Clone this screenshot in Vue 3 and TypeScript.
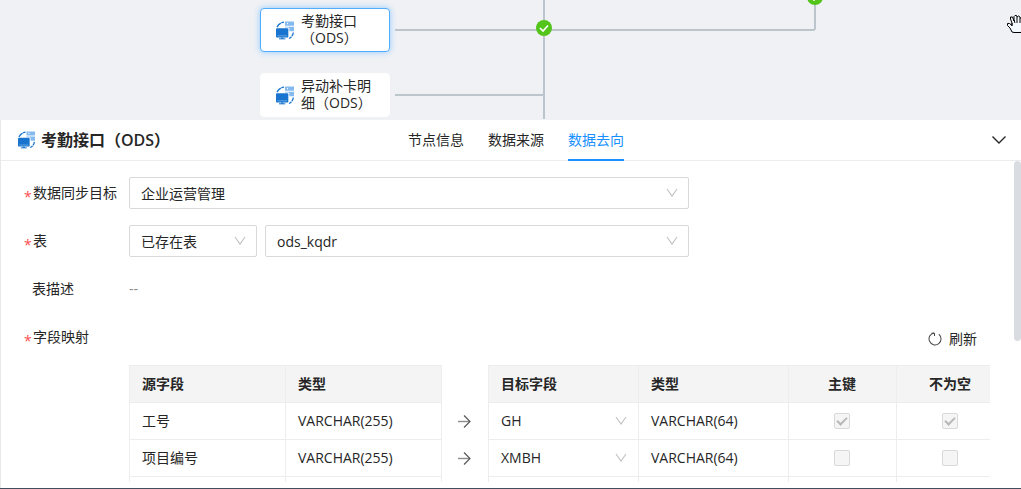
<script setup lang="ts">
import { ref } from 'vue'

interface FlowNode { id: string; label: string; active: boolean }
interface SourceField { name: string; type: string }
interface TargetField { name: string; type: string; primary: boolean; required: boolean }

const nodes: FlowNode[] = [
  { id: 'kq', label: '考勤接口（ODS）', active: true },
  { id: 'bk', label: '异动补卡明细（ODS）', active: false },
]

const tabs = ['节点信息', '数据来源', '数据去向']
const activeTab = ref('数据去向')

const target = ref('企业运营管理')
const tableMode = ref('已存在表')
const tableName = ref('ods_kqdr')

const sources: SourceField[] = [
  { name: '工号', type: 'VARCHAR(255)' },
  { name: '项目编号', type: 'VARCHAR(255)' },
]
const targets = ref<TargetField[]>([
  { name: 'GH', type: 'VARCHAR(64)', primary: true, required: true },
  { name: 'XMBH', type: 'VARCHAR(64)', primary: false, required: false },
])
</script>

<template>
  <div class="page">
    <svg class="defs" aria-hidden="true">
      <symbol id="sync" viewBox="0 0 54 56">
        <path d="M3 18C7 10 13 5 24 3" fill="none" stroke="#1874cf" stroke-width="4" stroke-dasharray="17 2 9" />
        <path d="M52 34C51 42 47 48 39 52" fill="none" stroke="#1874cf" stroke-width="4" stroke-dasharray="12 2 9" />
        <rect x="27" y="1" width="27" height="13" rx="1" fill="#85baf0" />
        <rect x="33" y="5" width="3" height="4" fill="#fff" />
        <path d="M27 17h27v13H40V22a4 4 0 0 0-4-3h-9z" fill="#85baf0" />
        <rect x="0" y="21" width="37" height="28" rx="3" fill="#1874cf" />
        <path d="M4 44h29" stroke="#8dbdec" stroke-width="2" />
        <path d="M9 53h19" stroke="#1874cf" stroke-width="3" />
        <path d="M15 49h7v4h-7z" fill="#1874cf" />
      </symbol>
      <symbol id="caret" viewBox="0 0 12 12">
        <path d="M1 2l5 7 5-7" fill="none" stroke="currentColor" stroke-width="1.1" />
      </symbol>
    </svg>

    <section class="canvas">
      <svg class="edges" aria-hidden="true">
        <g fill="none" stroke="#bdc5cc" stroke-width="2">
          <path d="M395 30H813a2 2 0 0 0 2-2V0" />
          <path d="M395 95H542a2 2 0 0 0 2-2" />
          <path d="M544 0V119" />
        </g>
        <g v-for="[x, y] in [[544, 28], [815, -3]]" :key="x" :transform="`translate(${x} ${y})`">
          <circle r="8" fill="#52c41a" />
          <path d="M-4 0l3 3 5-5.500" fill="none" stroke="#fff" stroke-width="1.700" />
        </g>
        <g transform="translate(1007 15)">
          <path
            d="M5 17L3 13L0.500 10.500V8.500H2.500L5 10.500V8L3.500 4V2H5.500L7 6V1.500L8 0.500H9.500L10 2L11.500 1L13 2V3L14.500 3L16 4V13L14 17.500H7z"
            fill="#f4f9ff" stroke="#000" stroke-width="1"
          />
          <path d="M5 8v3M7 5l1 3M10 2v6M13 3v5" fill="none" stroke="#000" stroke-width="1" />
        </g>
      </svg>
      <div v-for="n in nodes" :key="n.id" class="node" :class="[n.id, { active: n.active }]">
        <svg class="node-icon" aria-hidden="true"><use href="#sync" /></svg>
        <span class="node-label">{{ n.label }}</span>
      </div>
    </section>

    <section class="panel">
      <header class="head">
        <h2 class="title">
          <svg class="title-icon" aria-hidden="true"><use href="#sync" /></svg>
          考勤接口（ODS）
        </h2>
        <nav class="tabs">
          <button
            v-for="t in tabs" :key="t" type="button" class="tab"
            :class="{ on: t === activeTab }" @click="activeTab = t"
          >{{ t }}</button>
        </nav>
        <div class="tools">
          <button type="button" class="fold" aria-label="收起">
            <svg viewBox="0 0 14 8" width="14" height="8">
              <path d="M0.500 0.500L7 7L13.500 0.500" fill="none" stroke="#262626" stroke-width="1.400" />
            </svg>
          </button>
        </div>
      </header>

      <div class="body">
        <form class="form" @submit.prevent>
          <div class="row">
            <label class="label" for="target"><i>*</i>数据同步目标</label>
            <div class="select wide">
              <select id="target" v-model="target"><option>企业运营管理</option></select>
              <svg class="caret"><use href="#caret" /></svg>
            </div>
          </div>
          <div class="row">
            <label class="label" for="table"><i>*</i>表</label>
            <div class="pair">
              <div class="select mode">
                <select v-model="tableMode" aria-label="表"><option>已存在表</option></select>
                <svg class="caret"><use href="#caret" /></svg>
              </div>
              <div class="select grow">
                <select id="table" v-model="tableName"><option>ods_kqdr</option></select>
                <svg class="caret"><use href="#caret" /></svg>
              </div>
            </div>
          </div>
          <div class="row">
            <span class="label plain">表描述</span>
            <span class="empty">--</span>
          </div>
          <div class="row">
            <span class="label"><i>*</i>字段映射</span>
            <div class="mapping">
              <div class="bar">
                <button type="button" class="refresh">
                  <svg viewBox="0 0 14 14" width="14" height="14">
                    <path d="M9.500 1.400A6 6 0 1 1 4.500 1.400" fill="none" stroke="#444" stroke-width="1" transform="rotate(14 7 7)" />
                    <path d="M3.500 1.200H6.500V4" fill="none" stroke="#444" stroke-width="1" />
                  </svg>
                  刷新
                </button>
              </div>
              <div class="tables">
                <table class="grid source">
                  <thead><tr><th>源字段</th><th>类型</th></tr></thead>
                  <tbody>
                    <tr v-for="s in sources" :key="s.name"><td>{{ s.name }}</td><td>{{ s.type }}</td></tr>
                    <tr><td></td><td></td></tr>
                  </tbody>
                </table>
                <div class="arrows">
                  <span v-for="s in sources" :key="s.name" class="arrow">
                    <svg viewBox="0 0 14 14" width="14" height="14">
                      <path d="M0 7.500H12" stroke="#8c8c8c" stroke-width="1.400" />
                      <path d="M6 1.500l6 6-6 6" fill="none" stroke="#595959" stroke-width="1.200" />
                    </svg>
                  </span>
                </div>
                <div class="clip">
                  <table class="grid dest">
                    <colgroup><col class="c-lg"><col class="c-lg"><col class="c-sm"><col class="c-sm"></colgroup>
                    <thead>
                      <tr><th>目标字段</th><th>类型</th><th class="mid">主键</th><th class="mid">不为空</th></tr>
                    </thead>
                    <tbody>
                      <tr v-for="t in targets" :key="t.name">
                        <td class="pick">
                          <div class="select bare">
                            <select aria-label="目标字段"><option>{{ t.name }}</option></select>
                            <svg class="caret"><use href="#caret" /></svg>
                          </div>
                        </td>
                        <td>{{ t.type }}</td>
                        <td class="mid"><input v-model="t.primary" type="checkbox" disabled aria-label="主键"></td>
                        <td class="mid"><input v-model="t.required" type="checkbox" disabled aria-label="不为空"></td>
                      </tr>
                      <tr><td></td><td></td><td></td><td></td></tr>
                    </tbody>
                  </table>
                </div>
              </div>
            </div>
          </div>
        </form>
        <div class="track"><div class="thumb"></div></div>
      </div>
    </section>
  </div>
</template>

<style>
body { margin: 0; }
</style>

<style scoped>
* { box-sizing: border-box; }
.page {
  display: flex; flex-direction: column; height: 100vh; overflow: hidden;
  font: 14px/20px "Open Sans", "Noto Sans CJK SC", sans-serif; color: #262626;
  border-bottom: 1px solid #424e5e; background: #fff;
}
.defs { position: absolute; width: 0; height: 0; }
button, select, input { font: inherit; color: inherit; margin: 0; }
button { border: 0; background: none; padding: 0; cursor: pointer; }

.canvas { position: relative; flex: none; height: 120px; background: #eff1f5; overflow: hidden; }
.edges { position: absolute; inset: 0; width: 100%; height: 100%; }
.node {
  position: absolute; left: 260px; width: 130px; height: 44px; padding: 0 15px;
  display: flex; align-items: center; gap: 7px; background: #fff;
  border: 1px solid #fff; border-radius: 4px; line-height: 17px;
}
.node.kq { top: 8px; }
.node.bk { top: 73px; }
.node.active { border-color: #53adff; box-shadow: 0 0 6px #91c8ff; }
.node-icon { flex: none; width: 18px; height: 19px; }
.node-label { flex: none; width: 72px; padding-bottom: 2px; }

.panel { flex: 1; min-height: 0; display: flex; flex-direction: column; border-left: 1px solid #e8e8e8; padding-bottom: 6px; }
.head { flex: none; display: flex; height: 41px; padding: 0 7px 0 17px; border-bottom: 1px solid #ebedf0; }
.title { flex: 1; display: flex; align-items: center; gap: 6px; margin: 0; font-size: 16px; line-height: 24px; font-weight: 600; }
.title-icon { width: 17px; height: 18px; }
.tabs { display: flex; gap: 24px; height: 41px; }
.tab { border-bottom: 2px solid transparent; }
.tab.on { color: #1890ff; border-color: #1890ff; }
.tools { flex: 1; display: flex; justify-content: flex-end; }
.fold { width: 30px; display: flex; align-items: center; justify-content: center; }

.body { flex: 1; min-height: 0; display: flex; overflow: hidden; }
.form { flex: 1; min-width: 0; display: flex; flex-direction: column; gap: 16px; padding: 16px 24px 0 23px; }
.row { flex: none; display: grid; grid-template-columns: 105px minmax(0, 1fr); line-height: 32px; }
.label i { display: inline-block; width: 9px; font-style: normal; line-height: 20px; vertical-align: -4px; color: #ff4d4f; }
.label.plain { padding-left: 8px; }
.empty { color: #8c8c8c; }
.wide, .pair { width: 100%; max-width: 560px; }
.pair { display: flex; gap: 8px; }
.mode { width: 128px; }
.grow { flex: 1; }
.select { position: relative; height: 32px; }
.select select {
  appearance: none; display: block; width: 100%; height: 100%; padding: 0 28px 0 11px;
  border: 1px solid #d9d9d9; border-radius: 2px; background: #fff; outline: 0;
}
.caret { position: absolute; right: 11px; top: 10px; width: 12px; height: 12px; color: #bfbfbf; pointer-events: none; }

.bar { display: flex; justify-content: flex-end; align-items: center; height: 36px; padding-right: 13px; margin-bottom: 8px; }
.refresh { display: flex; align-items: center; gap: 7px; line-height: 20px; }
.tables { display: flex; line-height: 20px; }
.grid { flex: none; border-collapse: collapse; table-layout: fixed; }
.source { width: 313px; }
.dest { width: 516px; }
.c-lg { width: 150px; }
.c-sm { width: 108px; }
.grid th, .grid td { height: 37px; padding: 0 12px; border: 1px solid #ededed; text-align: left; }
.grid th { background: #f4f4f4; font-weight: 600; }
.grid .mid { padding: 0 13px 0 12px; text-align: center; }
.grid .pick { padding: 0; }
.bare select { border-color: transparent; background: transparent; }
.arrows { width: 46px; padding-top: 37px; }
.arrow { display: flex; align-items: center; justify-content: center; height: 37px; }
.clip { flex: 1; min-width: 0; overflow: hidden; }
input[type="checkbox"] {
  appearance: none; display: block; width: 16px; height: 16px; margin: 0 auto;
  border: 1px solid #d9d9d9; border-radius: 2px; background: #f5f5f5;
}
input[type="checkbox"]:checked::after {
  content: ""; display: block; width: 4px; height: 8px; margin: 1px auto 0;
  border: solid #b8b8b8; border-width: 0 2px 2px 0; box-sizing: content-box; transform: rotate(45deg);
}
.track { flex: none; width: 7px; }
.thumb { height: 56%; border-radius: 4px; background: #d9dde2; }
</style>
